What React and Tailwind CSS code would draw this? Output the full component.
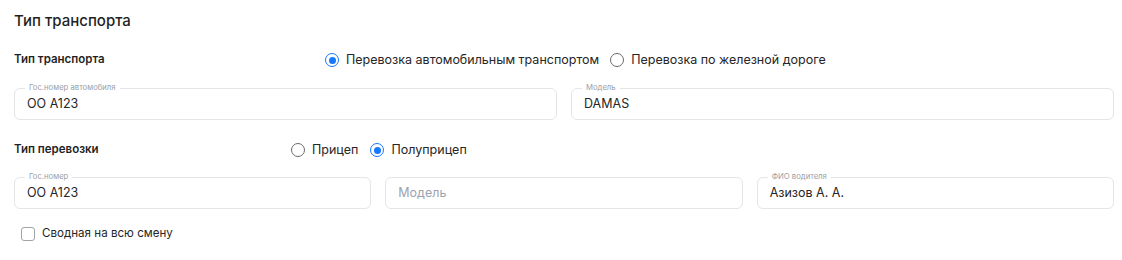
import React, { useState } from "react";

const Radio = ({ checked, label, onClick }) => (
  <label className="flex items-center gap-[7px] cursor-pointer" onClick={onClick}>
    <span
      className={
        checked
          ? "w-[14px] h-[14px] rounded-full border border-[#1677ff] flex items-center justify-center"
          : "w-[14px] h-[14px] rounded-full border border-[#6b6b6b]"
      }
    >
      {checked && <span className="w-[7px] h-[7px] rounded-full bg-[#1677ff]" />}
    </span>
    <span className="text-[12.5px] text-[#262626]">{label}</span>
  </label>
);

const Field = ({ label, value, placeholder }) => (
  <div className="relative flex-1 h-8 border border-[#e3e5e8] rounded-md flex items-center px-3">
    {label && (
      <span className="absolute -top-[6px] left-[10px] px-1 bg-white text-[7.7px] leading-[10px] text-[#9aa0a6]">
        {label}
      </span>
    )}
    {value ? (
      <span className="text-[12.5px] text-[#262626]">{value}</span>
    ) : (
      <span className="text-[12.5px] text-[#9ca3af]">{placeholder}</span>
    )}
  </div>
);

const App = () => {
  const [transport, setTransport] = useState("auto");
  const [trailer, setTrailer] = useState("semi");
  const [summary, setSummary] = useState(false);

  return (
    <div className="bg-white w-[1122px] h-[260px] pl-[14px] pr-[8px] pt-[11px] font-['Inter',sans-serif]">
      <h2 className="h-5 leading-5 text-[15px] font-medium text-[#1f1f1f]">Тип транспорта</h2>

      <div className="mt-[17px] h-6 flex items-center">
        <div className="w-[311px] text-[11.5px] font-semibold text-[#1f1f1f]">Тип транспорта</div>
        <div className="flex items-center gap-[11px]">
          <Radio
            checked={transport === "auto"}
            label="Перевозка автомобильным транспортом"
            onClick={() => setTransport("auto")}
          />
          <Radio
            checked={transport === "rail"}
            label="Перевозка по железной дороге"
            onClick={() => setTransport("rail")}
          />
        </div>
      </div>

      <div className="mt-[16px] flex gap-[14px]">
        <Field label="Гос.номер автомобиля" value="OO A123" />
        <Field label="Модель" value="DAMAS" />
      </div>

      <div className="mt-[18px] h-6 flex items-center">
        <div className="w-[277px] text-[11.5px] font-semibold text-[#1f1f1f]">Тип перевозки</div>
        <div className="flex items-center gap-[12px]">
          <Radio checked={trailer === "trailer"} label="Прицеп" onClick={() => setTrailer("trailer")} />
          <Radio checked={trailer === "semi"} label="Полуприцеп" onClick={() => setTrailer("semi")} />
        </div>
      </div>

      <div className="mt-[15px] flex gap-[14px]">
        <Field label="Гос.номер" value="OO A123" />
        <Field placeholder="Модель" />
        <Field label="ФИО водителя" value="Азизов А. А." />
      </div>

      <label
        className="mt-[15px] h-5 flex items-center gap-[7px] pl-[7px] cursor-pointer"
        onClick={() => setSummary(!summary)}
      >
        <span
          className={
            summary
              ? "w-[14px] h-[14px] rounded-[3px] bg-[#1677ff] border border-[#1677ff]"
              : "w-[14px] h-[14px] rounded-[3px] border border-[#a3a3a3]"
          }
        />
        <span className="text-[11.6px] text-[#262626]">Сводная на всю смену</span>
      </label>
    </div>
  );
};

export default App;
